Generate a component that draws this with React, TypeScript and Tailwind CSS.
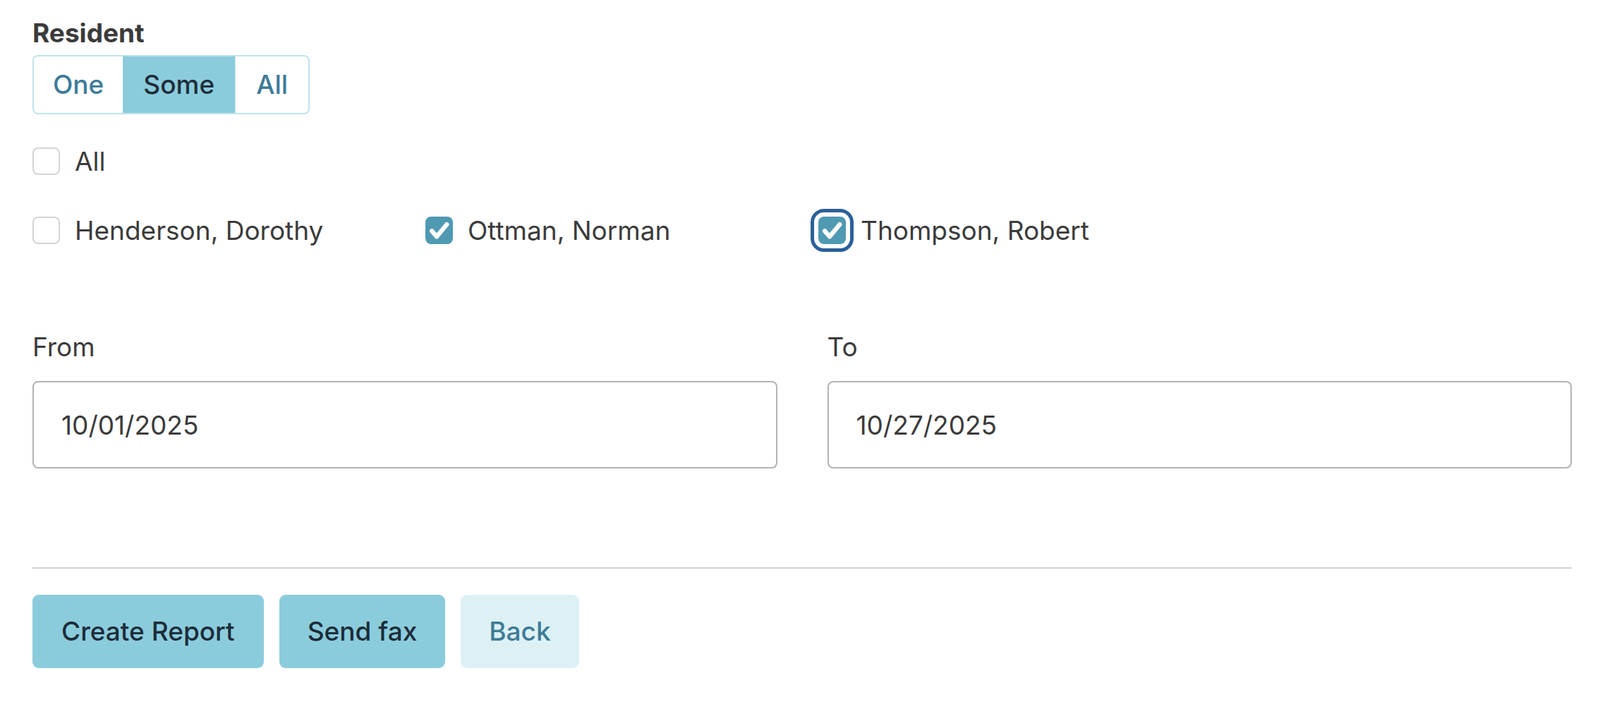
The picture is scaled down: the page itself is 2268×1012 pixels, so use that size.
import React from "react";

function Check() {
  return (
    <svg viewBox="0 0 24 24" className="w-[39px] h-[39px]" fill="none">
      <path d="M5.6 12.6l4.3 4.8L18.6 6.9" stroke="white" strokeWidth="3.9" strokeLinecap="round" strokeLinejoin="round" />
    </svg>
  );
}

function Box({ checked, focused }: { checked?: boolean; focused?: boolean }) {
  if (checked) {
    return (
      <span
        className={
          "flex items-center justify-center w-[39px] h-[39px] rounded-[8px] bg-[#4f99b3] shrink-0 " +
          (focused ? "outline-[5px] outline-solid outline-[#2b6099] outline-offset-[6px]" : "")
        }
      >
        <Check />
      </span>
    );
  }
  return <span className="block w-[39px] h-[39px] rounded-[8px] border-2 border-[#d5d5d5] bg-white shrink-0" />;
}

function CheckRow({ label, checked, focused }: { label: string; checked?: boolean; focused?: boolean }) {
  return (
    <label className="flex items-center gap-[21px] h-[39px]">
      <Box checked={checked} focused={focused} />
      <span>{label}</span>
    </label>
  );
}

export default function App() {
  return (
    <div className="min-h-[1012px] bg-white font-[family-name:Inter,sans-serif] text-[37px] text-[#3b3b3b] pt-[18px] pl-[46px] pr-[40px]">
      <div className="font-bold leading-[57px]">Resident</div>
      <div className="mt-[3px] flex w-max h-[84px] border-2 border-[#bfe3ec] rounded-[8px] overflow-hidden font-medium">
        <div className="flex items-center px-[27px] text-[#3e7b97]">One</div>
        <div className="flex items-center px-[29px] bg-[#8bccdc] text-[#1e2e3a]">Some</div>
        <div className="flex items-center px-[29px] text-[#3e7b97] border-l border-[#cdeaf1]">All</div>
      </div>

      <div className="mt-[47px]">
        <CheckRow label="All" />
      </div>
      <div className="mt-[59px] grid grid-cols-4 gap-x-[46px]">
        <CheckRow label="Henderson, Dorothy" />
        <CheckRow label="Ottman, Norman" checked />
        <CheckRow label="Thompson, Robert" checked focused />
      </div>

      <div className="mt-[117px] grid grid-cols-2 gap-x-[71px]">
        <div>
          <div className="leading-[57px]">From</div>
          <input
            readOnly
            defaultValue="10/01/2025"
            className="mt-[20px] block w-full h-[124px] border-2 border-[#b3b3b3] rounded-[8px] px-[39px] text-[#3b3b3b] outline-none"
          />
        </div>
        <div>
          <div className="leading-[57px]">To</div>
          <input
            readOnly
            defaultValue="10/27/2025"
            className="mt-[20px] block w-full h-[124px] border-2 border-[#b3b3b3] rounded-[8px] px-[39px] text-[#3b3b3b] outline-none"
          />
        </div>
      </div>

      <div className="mt-[140px] border-t-2 border-[#d2d2d2]" />

      <div className="mt-[37px] flex gap-[22px] font-medium">
        <button className="h-[104px] px-[41px] rounded-[9px] bg-[#8bccdc] text-[#1c2d3a]">Create Report</button>
        <button className="h-[104px] px-[40px] rounded-[9px] bg-[#8bccdc] text-[#1c2d3a]">Send fax</button>
        <button className="h-[104px] px-[40px] rounded-[9px] bg-[#ddf1f5] text-[#3e7b97]">Back</button>
      </div>
    </div>
  );
}
